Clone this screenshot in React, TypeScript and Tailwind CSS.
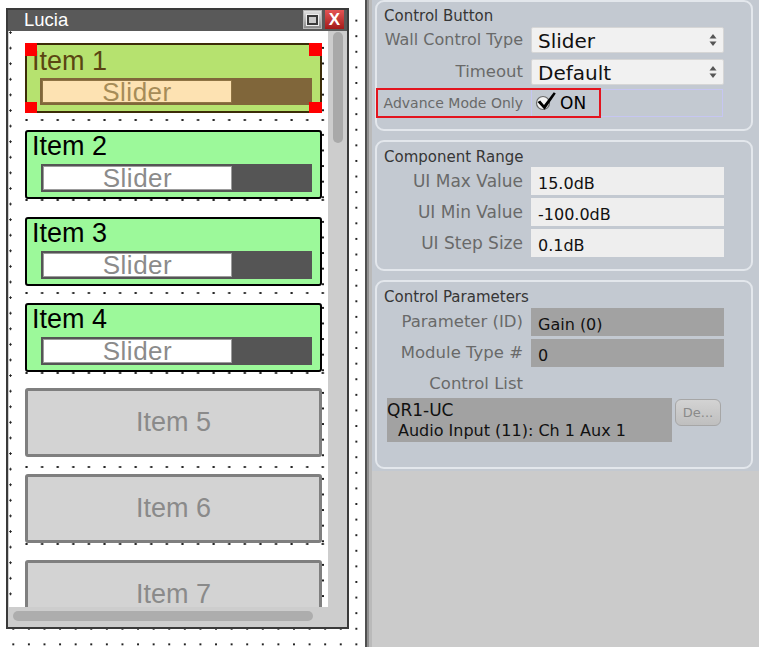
import React from "react";

const DOT_LEFT =
  "bg-[radial-gradient(circle_at_1.5px_1.5px,#202020_0.9px,transparent_1.4px)] bg-[length:3px_15.6px] bg-repeat-y";
const DOT_RIGHT =
  "bg-[radial-gradient(circle_at_1px_5px,#202020_0.9px,transparent_1.4px)] bg-[length:3px_15.6px] bg-repeat-y";
const DOT_ROW =
  "bg-[radial-gradient(circle_at_1.5px_1px,#202020_0.9px,transparent_1.4px)] bg-[length:15.6px_2px] bg-repeat-x";

function DotRow() {
  return <div className={`h-[2px] w-[300px] ${DOT_ROW}`} />;
}

function RightDots() {
  return <div className={`w-[3px] shrink-0 ${DOT_RIGHT}`} />;
}

function Item1() {
  return (
    <div className="flex">
      <div className="relative w-[297px] h-[70px] shrink-0 border-2 border-[#3c2c07] rounded-[3px] bg-[#b6e26f]">
        <div className="pl-[5px] pt-[3px] text-[27px] leading-[27px] text-[#5a4512]">Item 1</div>
        <div className="ml-[13px] mt-[3px] w-[272px] h-[27px] bg-[#80663a] p-[2px]">
          <div className="w-[190px] h-full bg-[#fde2b2] border border-[#8f7444] flex items-center justify-center text-[26px] leading-none tracking-[0.5px] text-[#a68c58]">
            Slider
          </div>
        </div>
        <div className="absolute -left-[2px] -top-[2px] w-[12px] h-[13px] bg-[#ff0000]" />
        <div className="absolute -right-[2px] -top-[2px] w-[13px] h-[13px] bg-[#ff0000]" />
        <div className="absolute -left-[2px] -bottom-[2px] w-[12px] h-[11px] bg-[#ff0000]" />
        <div className="absolute -right-[2px] -bottom-[2px] w-[13px] h-[11px] bg-[#ff0000]" />
      </div>
      <RightDots />
    </div>
  );
}

function GreenItem({ label }: { label: string }) {
  return (
    <div className="flex">
      <div className="w-[297px] h-[69px] shrink-0 border-2 border-black rounded-[3px] bg-[#9cf99a]">
        <div className="pl-[5px] pt-[0.5px] text-[27px] leading-[27px] text-black">{label}</div>
        <div className="ml-[14px] mt-[4.5px] w-[271px] h-[28px] bg-[#555555] p-[2px]">
          <div className="w-[189px] h-full bg-white border border-[#9c9c9c] flex items-center justify-center text-[26px] leading-none tracking-[0.5px] text-[#8b8b8b]">
            Slider
          </div>
        </div>
      </div>
      <RightDots />
    </div>
  );
}

function GrayItem({ label }: { label: string }) {
  return (
    <div className="flex">
      <div className="w-[297px] h-[69px] shrink-0 border-[3px] border-[#7f7f7f] rounded-[3px] bg-[#d3d3d3] flex items-center justify-center text-[27px] leading-none text-[#8a8a8a]">
        {label}
      </div>
      <RightDots />
    </div>
  );
}

function Window() {
  return (
    <div className="w-[343px] h-[621px] border-2 border-[#3a3a3a] flex flex-col">
      <div className="h-[21px] shrink-0 bg-[#595959] flex items-center pl-[16px] pr-[3px]">
        <span className="text-[18.5px] leading-none text-white">Lucia</span>
        <div className="ml-auto self-start flex gap-[3px]">
          <div className="w-[19px] h-[19px] bg-linear-to-b from-[#e2e2e2] to-[#8a8a8a] border border-[#b5b5b5] flex items-center justify-center">
            <div className="w-[11px] h-[10px] border-2 border-[#3a3a3a] bg-[#cacaca] outline outline-1 outline-[#efefef]" />
          </div>
          <div className="w-[19px] h-[19px] bg-linear-to-b from-[#e45454] to-[#a31818] flex items-center justify-center text-white font-bold text-[17px] leading-none">
            X
          </div>
        </div>
      </div>
      <div className="flex h-[576px] shrink-0">
        <div className="w-[320px] h-full shrink-0 bg-white border-l border-[#cfcfcf] flex overflow-hidden">
          <div className={`w-[16px] h-full shrink-0 ${DOT_LEFT}`} />
          <div className="w-[300px] shrink-0">
            <div className="h-[12px]" />
            <Item1 />
            <div className="h-[6px]" />
            <DotRow />
            <div className="h-[9px]" />
            <GreenItem label="Item 2" />
            <DotRow />
            <div className="h-[16px]" />
            <GreenItem label="Item 3" />
            <div className="h-[6px]" />
            <DotRow />
            <div className="h-[9px]" />
            <GreenItem label="Item 4" />
            <DotRow />
            <div className="h-[14px]" />
            <GrayItem label="Item 5" />
            <div className="h-[9px]" />
            <DotRow />
            <div className="h-[6px]" />
            <GrayItem label="Item 6" />
            <DotRow />
            <div className="h-[15px]" />
            <GrayItem label="Item 7" />
          </div>
        </div>
        <div className="w-[19px] h-full bg-[#cdcdcd] pl-[5px] pt-[1px]">
          <div className="w-[10px] h-[111px] rounded-full bg-[#a9a9a9]" />
        </div>
      </div>
      <div className="h-[20px] shrink-0 bg-[#cdcdcd] pl-[5px] pt-[4px]">
        <div className="w-[300px] h-[10px] rounded-full bg-[#adadad]" />
      </div>
    </div>
  );
}

const GROUP = "relative shrink-0 border-2 border-[#e3e7ec] rounded-[9px] bg-[#c3c9d1]";
const LABEL =
  "w-[146px] shrink-0 flex justify-end text-[16.5px] leading-[18px] text-[#696969] whitespace-nowrap";
const TITLE = "pl-[7px] text-[15px] leading-[16px] text-[#363636]";

function Arrows() {
  return (
    <svg width="8" height="14" viewBox="0 0 8 14" className="shrink-0">
      <polygon points="4,1 7.5,5.5 0.5,5.5" fill="#555" />
      <polygon points="0.5,8.5 7.5,8.5 4,13" fill="#555" />
    </svg>
  );
}

function Select({ text }: { text: string }) {
  return (
    <div className="ml-[8px] w-[193px] h-[26px] bg-[#f1f1f1] border border-[#d6d6d6] rounded-[2px] flex items-center pl-[6px] pr-[6px]">
      <span className="flex-1 pt-[2px] text-[20px] leading-[23px] text-[#111]">{text}</span>
      <Arrows />
    </div>
  );
}

function InputRow({ label, value, dark, big }: { label: string; value: string; dark?: boolean; big?: boolean }) {
  return (
    <div className="flex items-center h-[28px]">
      <div className={big ? `${LABEL} text-[17px]` : LABEL}>{label}</div>
      <div
        className={`ml-[8px] w-[193px] h-[28px] pl-[7px] pt-[8px] text-[16px] leading-[18px] text-[#111] ${
          dark ? "bg-[#a2a2a2]" : "bg-[#eeeeee]"
        }`}
      >
        {value}
      </div>
    </div>
  );
}

function RightPanel() {
  return (
    <div className="flex-1 h-full flex flex-col bg-[#cbcbcb] font-['DejaVu_Sans',sans-serif]">
      <div className="bg-[#c3c9d1] pl-[3px] pr-[6px] pb-[2px] flex flex-col gap-[9px]">
        {/* Control Button */}
        <div className={`${GROUP} h-[131px]`}>
          <div className={`h-[25px] pt-[6px] ${TITLE}`}>Control Button</div>
          <div className="flex items-center h-[26px]">
            <div className={`${LABEL} text-[16px]`}>Wall Control Type</div>
            <Select text="Slider" />
          </div>
          <div className="h-[6px]" />
          <div className="flex items-center h-[26px]">
            <div className={LABEL}>Timeout</div>
            <Select text="Default" />
          </div>
          <div className="h-[4px]" />
          <div className="flex items-center h-[28px]">
            <div className="w-[146px] shrink-0 flex justify-end text-[14px] leading-[16px] text-[#696969] whitespace-nowrap">
              Advance Mode Only
            </div>
            <div className="ml-[8px] w-[192px] h-[28px] border border-[#c6c6f2] flex items-center pl-[3px]">
              <svg width="21" height="22" viewBox="0 0 21 22" className="shrink-0">
                <circle cx="8" cy="11" r="6.5" fill="#f3f3f3" stroke="#6a6a6a" strokeWidth="1.2" />
                <path d="M2.5 10 L5.2 8.6 L9 13 L18.8 0.3 L20.8 1.6 L9.6 17.8 Z" fill="#000" />
              </svg>
              <span className="ml-[4px] text-[17px] leading-[20px] text-black">ON</span>
            </div>
          </div>
          <div className="absolute -left-[1px] top-[86px] w-[225px] h-[30px] border-2 border-[#e3141e]" />
        </div>

        {/* Component Range */}
        <div className={`${GROUP} h-[131px]`}>
          <div className={`h-[25px] pt-[7px] ${TITLE}`}>Component Range</div>
          <div className="flex flex-col gap-[3px]">
            <InputRow label="UI Max Value" value="15.0dB" big />
            <InputRow label="UI Min Value" value="-100.0dB" big />
            <InputRow label="UI Step Size" value="0.1dB" big />
          </div>
        </div>

        {/* Control Parameters */}
        <div className={`${GROUP} h-[189px]`}>
          <div className={`h-[26px] pt-[7px] ${TITLE}`}>Control Parameters</div>
          <div className="flex flex-col gap-[3px]">
            <InputRow label="Parameter (ID)" value="Gain (0)" dark />
            <InputRow label="Module Type #" value="0" dark />
            <div className="flex items-center h-[28px]">
              <div className={LABEL}>Control List</div>
            </div>
          </div>
          <div className="flex ml-[10px]">
            <div className="w-[285px] h-[44px] bg-[#a2a2a2] pt-[2px] text-[16px] leading-[20.5px] text-[#111] whitespace-nowrap">
              <div className="text-[17px]">QR1-UC</div>
              <div className="pl-[11px]">Audio Input (11): Ch 1 Aux 1</div>
            </div>
            <div className="ml-[3px] mt-[1px] w-[46px] h-[27px] rounded-[6px] border border-[#a6a6a6] bg-linear-to-b from-[#d3d3d3] to-[#bfbfbf] flex items-center justify-center text-[13px] leading-none text-[#8a8a8a]">
              De...
            </div>
          </div>
        </div>
      </div>
    </div>
  );
}

export default function App() {
  return (
    <div className="w-[759px] h-[647px] flex overflow-hidden bg-white">
      <div className="w-[365px] h-full shrink-0 pl-[6px] pt-[8px] bg-white bg-[radial-gradient(circle,#222_0.9px,transparent_1.4px)] bg-[length:15.6px_15.6px] bg-[position:5.5px_-2.8px] bg-clip-content font-['Liberation_Sans',Arial,sans-serif]">
        <Window />
      </div>
      <div className="w-[2px] h-full shrink-0 bg-[#505050]" />
      <div className="w-[2px] h-full shrink-0 bg-[#8f8f8f]" />
      <div className="w-[3px] h-full shrink-0 bg-[#bababa]" />
      <RightPanel />
    </div>
  );
}
